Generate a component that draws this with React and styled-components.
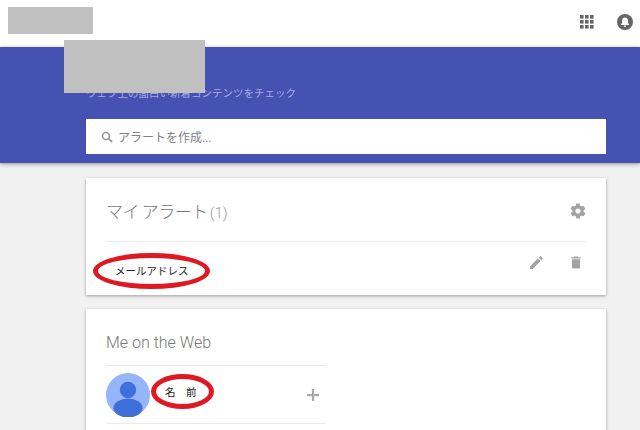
import React from "react";
import styled, { createGlobalStyle } from "styled-components";

const Global = createGlobalStyle`
  html, body {
    margin: 0;
    padding: 0;
    background: #f1f1f1;
    overflow: hidden;
  }
  body {
    font-family: Roboto, "Noto Sans CJK JP", sans-serif;
  }
`;

const Page = styled.div`
  position: relative;
  width: 640px;
  height: 430px;
  overflow: hidden;
`;

const TopBar = styled.div`
  height: 47px;
  background: #fff;
  display: flex;
  align-items: center;
  justify-content: flex-end;
  gap: 22px;
  padding: 0 7px 3px 0;
  box-sizing: border-box;
`;

const Hero = styled.div`
  height: 116px;
  background: #4552b2;
  box-shadow: 0 1px 4px rgba(0, 0, 0, 0.4);
  padding: 38px 34px 0 86px;
  box-sizing: border-box;
  position: relative;
`;

const Tagline = styled.div`
  height: 34px;
  font-size: 10.5px;
  line-height: 18px;
  color: #a6acdf;
`;

const SearchBox = styled.div`
  height: 35px;
  background: #fff;
  display: flex;
  align-items: center;
  gap: 5px;
  padding-left: 15px;
  font-size: 12px;
  color: #808080;
`;

const Content = styled.div`
  padding: 15px 34px 0 86px;
  display: flex;
  flex-direction: column;
  gap: 14px;
`;

const Card = styled.div`
  background: #fff;
  box-shadow: 0 1px 3px rgba(0, 0, 0, 0.35);
  padding: 0 20px;
`;

const CardHead = styled.div`
  display: flex;
  align-items: center;
  justify-content: space-between;
  height: ${(p) => p.$h}px;
  border-bottom: 1px solid #ebebeb;
  box-sizing: border-box;
  width: ${(p) => p.$w || "auto"};
`;

const AlertsTitle = styled.div`
  font-size: 17px;
  word-spacing: -1px;
  letter-spacing: -0.5px;
  color: #777;
  font-weight: 300;
  padding-top: 1px;
`;

const Count = styled.span`
  font-size: 15px;
  letter-spacing: 0;
  color: #999;
  margin-left: 2px;
`;

const AlertRow = styled.div`
  position: relative;
  height: 53px;
  display: flex;
  align-items: center;
  justify-content: space-between;
`;

const RowText = styled.div`
  font-size: 10.5px;
  color: #222;
  padding-left: 9px;
  padding-top: 4px;
`;

const RowIcons = styled.div`
  display: flex;
  gap: 23px;
  margin-right: 2px;
  margin-bottom: 12px;
`;

const WebTitle = styled.div`
  font-size: 16px;
  font-weight: 300;
  color: #777;
  padding-top: 11px;
`;

const PersonRow = styled.div`
  position: relative;
  width: 220px;
  height: 58px;
  display: flex;
  align-items: center;
  border-bottom: 1px solid #ebebeb;
  box-sizing: border-box;
`;

const PersonName = styled.div`
  font-size: 10.5px;
  color: #222;
  letter-spacing: 10.5px;
  margin-left: 15px;
  padding-bottom: 7px;
  flex: 1;
`;

const PlusMark = styled.svg`
  margin-right: 6px;
`;

const Redaction = styled.div`
  position: absolute;
  left: ${(p) => p.$x}px;
  top: ${(p) => p.$y}px;
  width: ${(p) => p.$w}px;
  height: ${(p) => p.$h}px;
  background: #c0c0c0;
`;

const RedRing = styled.div`
  position: absolute;
  left: ${(p) => p.$x}px;
  top: ${(p) => p.$y}px;
  width: ${(p) => p.$w}px;
  height: ${(p) => p.$h}px;
  box-sizing: border-box;
  border: 5px solid #e01822;
  border-radius: 50%;
`;

const App = () => (
  <Page>
    <Global />
    <TopBar>
      <svg width="16" height="16" viewBox="0 0 16 16" fill="#666">
        {[1, 6, 11].map((y) =>
          [1, 6, 11].map((x) => <rect key={`${x}-${y}`} x={x} y={y} width="3.6" height="3.6" />)
        )}
      </svg>
      <svg width="16" height="16" viewBox="0 0 16 16">
        <circle cx="8" cy="8" r="8" fill="#666" />
        <path d="M8 3.4c-1.9 0-3 1.5-3 3.3v2.4L3.9 10.6v.4h8.2v-.4L11 9.1V6.7c0-1.8-1.1-3.3-3-3.3z" fill="#fff" />
        <rect x="7" y="11.6" width="2" height="1.2" fill="#fff" />
      </svg>
    </TopBar>
    <Hero>
      <Tagline>ウェブ上の面白い新着コンテンツをチェック</Tagline>
      <SearchBox>
        <svg width="12" height="12" viewBox="0 0 12 12" fill="none" stroke="#9a9a9a">
          <circle cx="5" cy="5" r="3.5" strokeWidth="1.7" />
          <path d="M7.6 7.6 11 11" strokeWidth="2" />
        </svg>
        アラートを作成...
      </SearchBox>
    </Hero>
    <Content>
      <Card>
        <CardHead $h={64}>
          <AlertsTitle>
            マイ アラート<Count>(1)</Count>
          </AlertsTitle>
          <svg width="18" height="18" viewBox="0 0 24 24" fill="#a3a3a3" style={{ marginRight: -1, marginTop: 2 }}>
            <path d="M19.4 13c0-.3.1-.6.1-1s0-.7-.1-1l2.1-1.6c.2-.1.2-.4.1-.6l-2-3.5c-.1-.2-.4-.3-.6-.2l-2.5 1c-.5-.4-1.1-.7-1.7-1l-.4-2.6c0-.3-.2-.4-.5-.4h-4c-.2 0-.4.2-.5.4l-.4 2.6c-.6.3-1.1.6-1.7 1l-2.5-1c-.2-.1-.5 0-.6.2l-2 3.5c-.1.2-.1.5.1.6L4.6 11c0 .3-.1.6-.1 1s0 .7.1 1l-2.1 1.6c-.2.1-.2.4-.1.6l2 3.5c.1.2.4.3.6.2l2.5-1c.5.4 1.1.7 1.7 1l.4 2.6c0 .2.2.4.5.4h4c.2 0 .4-.2.5-.4l.4-2.6c.6-.3 1.1-.6 1.7-1l2.5 1c.2.1.5 0 .6-.2l2-3.5c.1-.2.1-.5-.1-.6L19.4 13zM12 15.5c-1.9 0-3.5-1.6-3.5-3.5s1.6-3.5 3.5-3.5 3.5 1.6 3.5 3.5-1.6 3.5-3.5 3.5z" />
          </svg>
        </CardHead>
        <AlertRow>
          <RowText>メールアドレス</RowText>
          <RowIcons>
            <svg width="17" height="17" viewBox="0 0 24 24" fill="#a3a3a3">
              <path d="M3 17.25V21h3.75L17.8 9.94l-3.75-3.75L3 17.25zM20.7 7.04a1 1 0 0 0 0-1.41l-2.34-2.34a1 1 0 0 0-1.41 0l-1.83 1.83 3.75 3.75 1.83-1.83z" />
            </svg>
            <svg width="16" height="17" viewBox="0 0 24 24" fill="#a3a3a3">
              <path d="M6 19c0 1.1.9 2 2 2h8c1.1 0 2-.9 2-2V7H6v12zM19 4h-3.5l-1-1h-5l-1 1H5v2h14V4z" />
            </svg>
          </RowIcons>
        </AlertRow>
      </Card>
      <Card>
        <CardHead $h={57} $w="220px">
          <WebTitle>Me on the Web</WebTitle>
        </CardHead>
        <PersonRow>
          <svg width="44" height="44" viewBox="0 0 44 44">
            <circle cx="22" cy="22" r="22" fill="#94b6f8" />
            <circle cx="22" cy="17" r="8.2" fill="#3f6fd8" />
            <ellipse cx="22" cy="35" rx="14.5" ry="9.5" fill="#3f6fd8" />
          </svg>
          <PersonName>名前</PersonName>
          <PlusMark width="14" height="14" viewBox="0 0 14 14" fill="#a8a8a8">
            <rect x="1" y="6" width="12" height="2.2" />
            <rect x="5.9" y="1" width="2.2" height="12" />
          </PlusMark>
        </PersonRow>
        <PersonRow />
      </Card>
    </Content>
    <Redaction $x={8} $y={7} $w={85} $h={27} />
    <Redaction $x={64} $y={40} $w={141} $h={53} />
    <RedRing $x={93} $y={253} $w={117} $h={36} />
    <RedRing $x={151} $y={374} $w={63} $h={35} />
  </Page>
);

export default App;
